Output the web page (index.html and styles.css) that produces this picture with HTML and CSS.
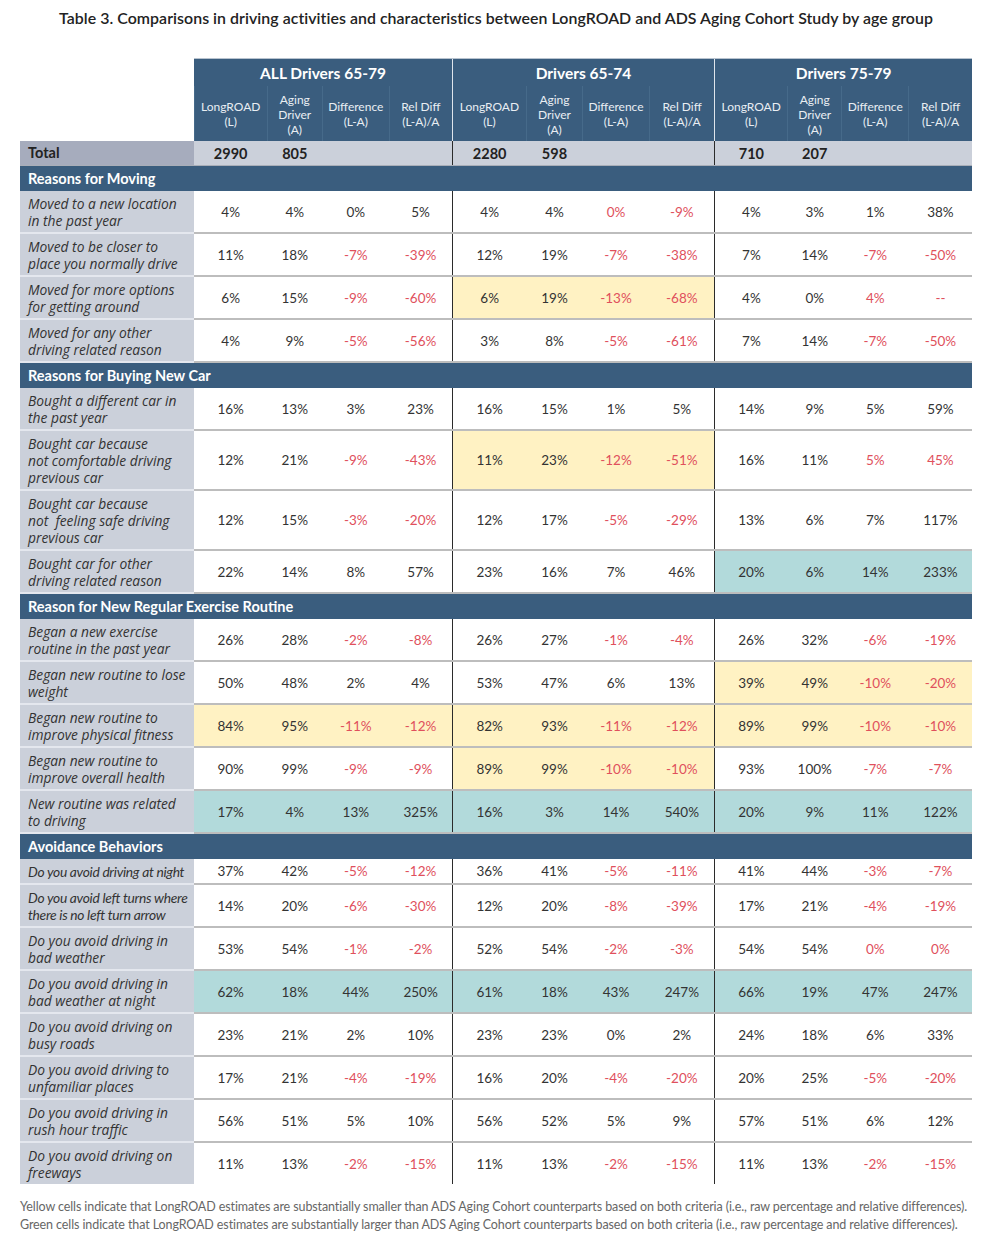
FILE: index.html
```html
<!DOCTYPE html>
<html lang="en">
<head>
<meta charset="utf-8">
<title>Table 3</title>
<link rel="stylesheet" href="styles.css">
</head>
<body>
<div class="page">
  <h1 class="title">Table 3. Comparisons in driving activities and characteristics between LongROAD and ADS Aging Cohort Study by age group</h1>
  <table class="tbl">
    <colgroup>
      <col class="c-label">
      <col class="c-l"><col class="c-a"><col class="c-d"><col class="c-r">
      <col class="c-l2"><col class="c-a2"><col class="c-d"><col class="c-r2">
      <col class="c-l"><col class="c-a3"><col class="c-d"><col class="c-r">
    </colgroup>
    <thead>
      <tr class="h-group">
        <th class="blank"></th>
        <th colspan="4" class="grp">ALL Drivers 65-79</th>
        <th colspan="4" class="grp gsep">Drivers 65-74</th>
        <th colspan="4" class="grp gsep">Drivers 75-79</th>
      </tr>
      <tr class="h-sub">
        <th class="blank"></th>
        <th>LongROAD<br>(L)</th><th>Aging<br>Driver<br>(A)</th><th>Difference<br>(L-A)</th><th>Rel Diff<br>(L-A)/A</th>
        <th class="gsep">LongROAD<br>(L)</th><th>Aging<br>Driver<br>(A)</th><th>Difference<br>(L-A)</th><th>Rel Diff<br>(L-A)/A</th>
        <th class="gsep">LongROAD<br>(L)</th><th>Aging<br>Driver<br>(A)</th><th>Difference<br>(L-A)</th><th>Rel Diff<br>(L-A)/A</th>
      </tr>
    </thead>
    <tbody>
      <tr class="total">
        <td class="lbl">Total</td>
        <td>2990</td><td>805</td><td></td><td></td>
        <td class="g">2280</td><td>598</td><td></td><td></td>
        <td class="g">710</td><td>207</td><td></td><td></td>
      </tr>
      <tr class="sec"><td colspan="13">Reasons for Moving</td></tr>
      <tr class="two">
        <td class="lbl">Moved to a new location in the past year</td>
        <td>4%</td><td>4%</td><td>0%</td><td>5%</td>
        <td class="g">4%</td><td>4%</td><td class="neg">0%</td><td class="neg">-9%</td>
        <td class="g">4%</td><td>3%</td><td>1%</td><td>38%</td>
      </tr>
      <tr class="two">
        <td class="lbl">Moved to be closer to place you normally drive</td>
        <td>11%</td><td>18%</td><td class="neg">-7%</td><td class="neg">-39%</td>
        <td class="g">12%</td><td>19%</td><td class="neg">-7%</td><td class="neg">-38%</td>
        <td class="g">7%</td><td>14%</td><td class="neg">-7%</td><td class="neg">-50%</td>
      </tr>
      <tr class="two">
        <td class="lbl">Moved for more options for getting around</td>
        <td>6%</td><td>15%</td><td class="neg">-9%</td><td class="neg">-60%</td>
        <td class="g y">6%</td><td class="y">19%</td><td class="neg y">-13%</td><td class="neg y">-68%</td>
        <td class="g">4%</td><td>0%</td><td class="neg">4%</td><td class="neg">--</td>
      </tr>
      <tr class="two">
        <td class="lbl">Moved for any other driving related reason</td>
        <td>4%</td><td>9%</td><td class="neg">-5%</td><td class="neg">-56%</td>
        <td class="g">3%</td><td>8%</td><td class="neg">-5%</td><td class="neg">-61%</td>
        <td class="g">7%</td><td>14%</td><td class="neg">-7%</td><td class="neg">-50%</td>
      </tr>
      <tr class="sec"><td colspan="13">Reasons for Buying New Car</td></tr>
      <tr class="two">
        <td class="lbl">Bought a different car in the past year</td>
        <td>16%</td><td>13%</td><td>3%</td><td>23%</td>
        <td class="g">16%</td><td>15%</td><td>1%</td><td>5%</td>
        <td class="g">14%</td><td>9%</td><td>5%</td><td>59%</td>
      </tr>
      <tr class="three">
        <td class="lbl">Bought car because<br>not comfortable driving previous car</td>
        <td>12%</td><td>21%</td><td class="neg">-9%</td><td class="neg">-43%</td>
        <td class="g y">11%</td><td class="y">23%</td><td class="neg y">-12%</td><td class="neg y">-51%</td>
        <td class="g">16%</td><td>11%</td><td class="neg">5%</td><td class="neg">45%</td>
      </tr>
      <tr class="three">
        <td class="lbl">Bought car because<br>not&nbsp; feeling safe driving previous car</td>
        <td>12%</td><td>15%</td><td class="neg">-3%</td><td class="neg">-20%</td>
        <td class="g">12%</td><td>17%</td><td class="neg">-5%</td><td class="neg">-29%</td>
        <td class="g">13%</td><td>6%</td><td>7%</td><td>117%</td>
      </tr>
      <tr class="two">
        <td class="lbl">Bought car for other driving related reason</td>
        <td>22%</td><td>14%</td><td>8%</td><td>57%</td>
        <td class="g">23%</td><td>16%</td><td>7%</td><td>46%</td>
        <td class="g t">20%</td><td class="t">6%</td><td class="t">14%</td><td class="t">233%</td>
      </tr>
      <tr class="sec"><td colspan="13">Reason for New Regular Exercise Routine</td></tr>
      <tr class="two">
        <td class="lbl">Began a new exercise routine in the past year</td>
        <td>26%</td><td>28%</td><td class="neg">-2%</td><td class="neg">-8%</td>
        <td class="g">26%</td><td>27%</td><td class="neg">-1%</td><td class="neg">-4%</td>
        <td class="g">26%</td><td>32%</td><td class="neg">-6%</td><td class="neg">-19%</td>
      </tr>
      <tr class="two">
        <td class="lbl">Began new routine to lose weight</td>
        <td>50%</td><td>48%</td><td>2%</td><td>4%</td>
        <td class="g">53%</td><td>47%</td><td>6%</td><td>13%</td>
        <td class="g y">39%</td><td class="y">49%</td><td class="neg y">-10%</td><td class="neg y">-20%</td>
      </tr>
      <tr class="two">
        <td class="lbl">Began new routine to improve physical fitness</td>
        <td class="y">84%</td><td class="y">95%</td><td class="neg y">-11%</td><td class="neg y">-12%</td>
        <td class="g y">82%</td><td class="y">93%</td><td class="neg y">-11%</td><td class="neg y">-12%</td>
        <td class="g y">89%</td><td class="y">99%</td><td class="neg y">-10%</td><td class="neg y">-10%</td>
      </tr>
      <tr class="two">
        <td class="lbl">Began new routine to improve overall health</td>
        <td>90%</td><td>99%</td><td class="neg">-9%</td><td class="neg">-9%</td>
        <td class="g y">89%</td><td class="y">99%</td><td class="neg y">-10%</td><td class="neg y">-10%</td>
        <td class="g">93%</td><td>100%</td><td class="neg">-7%</td><td class="neg">-7%</td>
      </tr>
      <tr class="two">
        <td class="lbl">New routine was related to driving</td>
        <td class="t">17%</td><td class="t">4%</td><td class="t">13%</td><td class="t">325%</td>
        <td class="g t">16%</td><td class="t">3%</td><td class="t">14%</td><td class="t">540%</td>
        <td class="g t">20%</td><td class="t">9%</td><td class="t">11%</td><td class="t">122%</td>
      </tr>
      <tr class="sec"><td colspan="13">Avoidance Behaviors</td></tr>
      <tr class="one">
        <td class="lbl nar">Do you avoid driving at night</td>
        <td>37%</td><td>42%</td><td class="neg">-5%</td><td class="neg">-12%</td>
        <td class="g">36%</td><td>41%</td><td class="neg">-5%</td><td class="neg">-11%</td>
        <td class="g">41%</td><td>44%</td><td class="neg">-3%</td><td class="neg">-7%</td>
      </tr>
      <tr class="two">
        <td class="lbl nar">Do you avoid left turns where there is no left turn arrow</td>
        <td>14%</td><td>20%</td><td class="neg">-6%</td><td class="neg">-30%</td>
        <td class="g">12%</td><td>20%</td><td class="neg">-8%</td><td class="neg">-39%</td>
        <td class="g">17%</td><td>21%</td><td class="neg">-4%</td><td class="neg">-19%</td>
      </tr>
      <tr class="two">
        <td class="lbl">Do you avoid driving in bad weather</td>
        <td>53%</td><td>54%</td><td class="neg">-1%</td><td class="neg">-2%</td>
        <td class="g">52%</td><td>54%</td><td class="neg">-2%</td><td class="neg">-3%</td>
        <td class="g">54%</td><td>54%</td><td class="neg">0%</td><td class="neg">0%</td>
      </tr>
      <tr class="two">
        <td class="lbl">Do you avoid driving in bad weather at night</td>
        <td class="t">62%</td><td class="t">18%</td><td class="t">44%</td><td class="t">250%</td>
        <td class="g t">61%</td><td class="t">18%</td><td class="t">43%</td><td class="t">247%</td>
        <td class="g t">66%</td><td class="t">19%</td><td class="t">47%</td><td class="t">247%</td>
      </tr>
      <tr class="two">
        <td class="lbl">Do you avoid driving on busy roads</td>
        <td>23%</td><td>21%</td><td>2%</td><td>10%</td>
        <td class="g">23%</td><td>23%</td><td>0%</td><td>2%</td>
        <td class="g">24%</td><td>18%</td><td>6%</td><td>33%</td>
      </tr>
      <tr class="two">
        <td class="lbl">Do you avoid driving to unfamiliar places</td>
        <td>17%</td><td>21%</td><td class="neg">-4%</td><td class="neg">-19%</td>
        <td class="g">16%</td><td>20%</td><td class="neg">-4%</td><td class="neg">-20%</td>
        <td class="g">20%</td><td>25%</td><td class="neg">-5%</td><td class="neg">-20%</td>
      </tr>
      <tr class="two">
        <td class="lbl">Do you avoid driving in rush hour traffic</td>
        <td>56%</td><td>51%</td><td>5%</td><td>10%</td>
        <td class="g">56%</td><td>52%</td><td>5%</td><td>9%</td>
        <td class="g">57%</td><td>51%</td><td>6%</td><td>12%</td>
      </tr>
      <tr class="two last">
        <td class="lbl">Do you avoid driving on freeways</td>
        <td>11%</td><td>13%</td><td class="neg">-2%</td><td class="neg">-15%</td>
        <td class="g">11%</td><td>13%</td><td class="neg">-2%</td><td class="neg">-15%</td>
        <td class="g">11%</td><td>13%</td><td class="neg">-2%</td><td class="neg">-15%</td>
      </tr>
    </tbody>
  </table>
  <div class="notes">
    <p>Yellow cells indicate that LongROAD estimates are substantially smaller than ADS Aging Cohort counterparts based on both criteria (i.e., raw percentage and relative differences).</p>
    <p>Green cells indicate that LongROAD estimates are substantially larger than ADS Aging Cohort counterparts based on both criteria (i.e., raw percentage and relative differences).</p>
  </div>
</div>
</body>
</html>
```

FILE: styles.css
```css
html, body {
  margin: 0;
  padding: 0;
  background: #ffffff;
}
.page {
  width: 996px;
  padding: 0 0 0 20px;
  box-sizing: border-box;
  font-family: Lato, "Open Sans", sans-serif;
  color: #333333;
}
.title {
  margin: 0;
  padding: 8px 0 0 0;
  width: 952px;
  height: 58px;
  box-sizing: border-box;
  text-align: center;
  font-size: 15.9px;
  font-weight: 600;
  color: #222222;
  letter-spacing: 0.05px;
}
.tbl {
  border-collapse: collapse;
  table-layout: fixed;
  width: 952px;
}
.c-label { width: 174px; }
.c-l { width: 73px; }
.c-l2 { width: 74px; }
.c-a { width: 55px; }
.c-a2 { width: 56px; }
.c-a3 { width: 54px; }
.c-d { width: 67px; }
.c-r { width: 63px; }
.c-r2 { width: 65px; }

.tbl th, .tbl td {
  padding: 0;
  text-align: center;
  vertical-align: middle;
}
.h-group th.grp {
  background: #3a5d7e;
  color: #ffffff;
  font-size: 15.5px;
  font-weight: 700;
  height: 27px;
  border-top: 1px solid #b8c3cf;
}
.h-group th.gsep {
  border-left: 1px solid #dfe5ec;
}
.h-sub th {
  background: #3a5d7e;
  color: #e9eef3;
  font-size: 12px;
  font-weight: 400;
  line-height: 15px;
  height: 54px;
  padding-top: 1px;
}
.h-sub th + th {
  border-left: 1px solid #466a8a;
}
.h-sub th.gsep {
  border-left: 1px solid #dfe5ec;
}
.tbl th.blank {
  background: #ffffff;
  border: none;
}
.tbl tr.total td {
  background: #cbd0da;
  font-weight: 700;
  font-size: 14.5px;
  color: #222;
  height: 24px;
  border-bottom: 1px solid #a9aeb8;
}
.tbl tr.total td.g { border-left: 1px solid #2b2b2b; }
.tbl tr.total td.lbl {
  background: #a6acbd;
  font-family: Lato, sans-serif;
  font-style: normal;
  text-align: left;
  padding-left: 8px;
  font-size: 14.5px;
  line-height: 24px;
}
.tbl tr.sec td {
  background: #3a5d7e;
  color: #ffffff;
  font-weight: 700;
  font-size: 14.5px;
  text-align: left;
  padding-left: 8px;
  height: 25px;
  border-bottom: none;
}
.tbl td {
  font-size: 13.5px;
  color: #333333;
  border-bottom: 2px solid #bdbdbd;
}
.tbl td.lbl {
  background: #cbd0da;
  text-align: left;
  font-family: "Open Sans", sans-serif;
  font-style: italic;
  font-size: 13.8px;
  line-height: 17px;
  padding: 0 4px 0 8px;
  color: #333;
  border-bottom: 2px solid #e4e7ee;
}
.tbl td.lbl.nar {
  font-family: Lato, sans-serif;
  font-size: 13.8px;
  letter-spacing: -0.3px;
}
.tbl td.g {
  border-left: 1px solid #2b2b2b;
}
.two td { height: 41px; }
.three td { height: 58px; }
.one td { height: 24px; }
.tbl tr.last td { border-bottom: none; height: 41px; }
.tbl td.neg { color: #e0505c; }
.tbl td.y { background: #fff2c3; }
.tbl td.t { background: #b2dadb; }
.notes {
  margin-top: 14px;
  font-size: 12.5px;
  line-height: 17.5px;
  color: #666666;
  letter-spacing: -0.1px;
}
.notes p { margin: 0; }
```
